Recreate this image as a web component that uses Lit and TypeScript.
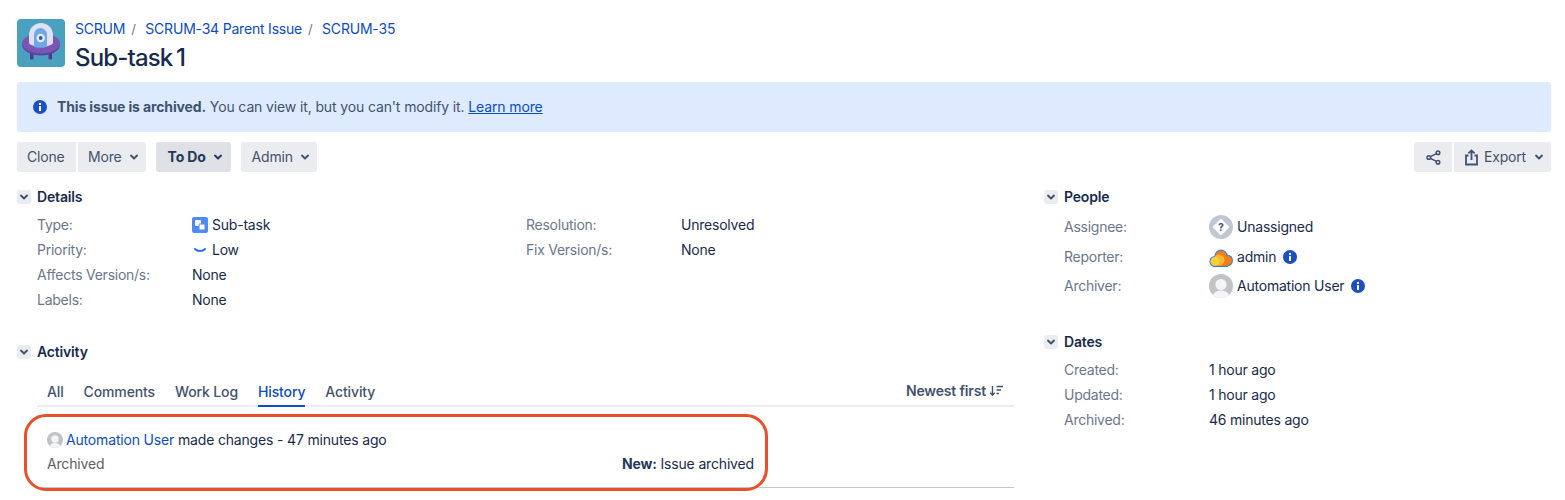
import { LitElement, html, css } from "lit";
import { customElement } from "lit/decorators.js";

const chev = () => html`<svg width="10" height="10" viewBox="0 0 10 10" fill="none"><path d="M2 3.6 5 6.4 8 3.6" stroke="currentColor" stroke-width="2" stroke-linecap="round" stroke-linejoin="round"/></svg>`;
const info = html`<svg width="14" height="14" viewBox="0 0 14 14"><circle cx="7" cy="7" r="7" fill="#1d4fc4"/><rect x="6" y="6" width="2" height="5" rx=".6" fill="#fff"/><circle cx="7" cy="4" r="1.15" fill="#fff"/></svg>`;
const userAvatar = (s: number) => html`<svg width="${s}" height="${s}" viewBox="0 0 24 24"><defs><clipPath id="uc"><circle cx="12" cy="12" r="12"/></clipPath></defs><g clip-path="url(#uc)"><rect width="24" height="24" fill="#c1c3c6"/><circle cx="12" cy="10.5" r="5.6" fill="#f4f5f7"/><path d="M2.5 26c.5-6.5 4.5-9.5 9.5-9.5s9 3 9.5 9.5z" fill="#f4f5f7"/></g></svg>`;

@customElement("app-root")
export class AppRoot extends LitElement {
  static styles = css`
    :host { display: block; width: 1565px; height: 500px; overflow: hidden; background: #fff; position: relative; box-sizing: border-box; padding: 19px 14px 0 17px; font: 14px/20px Inter, "Liberation Sans", sans-serif; letter-spacing: -0.17px; color: #172b4d; }
    a { color: #0c4cc4; text-decoration: none; }
    .head { display: flex; gap: 10px; height: 48px; }
    .crumbs { display: flex; height: 20px; align-items: center; letter-spacing: -0.2px; }
    .crumbs i { font-style: normal; color: #6b778c; margin: 0 9.5px 0 6px; font-size: 13px; }
    h1 { margin: 5px 0 0; font-size: 24px; line-height: 28px; font-weight: 500; letter-spacing: -0.85px; word-spacing: -2px; color: #172b4d; }
    .banner { margin-top: 15px; height: 50px; background: #deebff; border-radius: 3px; display: flex; align-items: center; padding-left: 16px; gap: 10px; color: #42526e; letter-spacing: -0.13px; }
    .banner b { font-weight: 700; }
    .banner a { text-decoration: underline; }
    .tools { margin-top: 10px; display: flex; height: 30px; }
    .btn { height: 30px; box-sizing: border-box; display: flex; align-items: center; gap: 7px; background: #ebecf0; color: #42526e; border-radius: 3px; padding: 0 7px 0 10px; }
    .btn.l { border-radius: 3px 0 0 3px; margin-right: 2px; }
    .btn.r { border-radius: 0 3px 3px 0; }
    .btn.todo { background: #dfe1e6; color: #253858; font-weight: 700; margin: 0 10px; padding: 0 8px 0 12px; }
    .btn.admin { padding-left: 11px; }
    .btn.clone { width: 59px; }
    .btn.share { width: 38px; padding-left: 12px; }
    .btn.export { gap: 5px; padding-right: 7px; }
    .export-label { margin-right: 3px; }
    .spacer { flex: 1; }
    .cols { display: grid; grid-template-columns: 997px 507px; gap: 30px; margin-top: 15px; }
    .sec-h { display: flex; align-items: center; height: 20px; gap: 6px; font-weight: 600; color: #172b4d; }
    .tog { width: 14px; height: 14px; background: #ebecf0; border-radius: 3px; display: flex; align-items: center; justify-content: center; color: #42526e; }
    .details { display: grid; grid-template-columns: 489px 1fr; margin: 5px 0 0 20px; }
    .row { display: grid; height: 25px; align-items: center; grid-template-columns: 155px 1fr; }
    .lbl { color: #6b778c; letter-spacing: -0.25px; }
    .val { display: flex; align-items: center; gap: 4px; color: #172b4d; letter-spacing: -0.22px; }
    .info-wrap { margin-left: 3px; display: flex; }
    .activity { margin-top: 30px; }
    .tabs { display: flex; margin: 15px 0 0 20px; padding-left: 10px; height: 28px; border-bottom: 2px solid #ebecf0; gap: 20px; color: #42526e; font-weight: 500; letter-spacing: -0.13px; }
    .tab { height: 30px; box-sizing: border-box; padding-top: 5px; }
    .tab.on { color: #0c4cc4; border-bottom: 2px solid #0c4cc4; }
    .sort { margin-left: auto; padding: 4px 10px 0 0; display: flex; gap: 3px; height: 20px; font-weight: 600; letter-spacing: -0.17px; }
    .sort svg { margin-top: 4px; }
    .entry { margin-left: 20px; height: 81px; box-sizing: border-box; border-bottom: 1px solid #c1c7d0; padding: 23px 0 0 10px; }
    .who { display: flex; align-items: center; gap: 3px; height: 20px; }
    .ch { display: flex; margin-top: 4px; height: 20px; }
    .ch .o { width: 575px; color: #5e5e5e; }
    .ch b { font-weight: 700; color: #253858; }
    .mark { position: absolute; left: 24px; top: 414px; width: 744px; height: 77px; box-sizing: border-box; border: 3px solid #e8502a; border-radius: 22px; pointer-events: none; }
    .side { margin: 6px 0 0 20px; }
    .people .side { margin-top: 5.5px; }
    .side .row { grid-template-columns: 145px 1fr; }
    .people .row { height: 29.5px; }
    .dates { margin-top: 30.5px; }
  `;

  row(l: string, v: unknown) {
    return html`<div class="row"><span class="lbl">${l}</span><span class="val">${v}</span></div>`;
  }

  render() {
    return html`
      <div class="head">
        <svg width="48" height="48" viewBox="0 0 48 48">
          <rect width="48" height="48" rx="4" fill="#4aa1bf"/>
          <rect x="13" y="32" width="3.500" height="8.500" rx="1" fill="#4f3a8f"/><rect x="31.500" y="32" width="3.500" height="8.500" rx="1" fill="#4f3a8f"/>
          <ellipse cx="24" cy="25.500" rx="19" ry="11" fill="#5d429f"/>
          <ellipse cx="24" cy="24.500" rx="19" ry="10" fill="#7a55b6"/>
          <path d="M12 24V16a12 12 0 0 1 24 0v8c-3 5-21 5-24 0z" fill="#dfe0f4"/>
          <path d="M17 28V15.500a6.500 6.500 0 0 1 13 0V28c-3 1-10 1-13 0z" fill="#6fa8e4"/>
          <circle cx="23.700" cy="19" r="4.200" fill="#e3ecf7"/><circle cx="23.700" cy="19" r="1.900" fill="#3c5a8c"/>
        </svg>
        <div>
          <div class="crumbs"><a>SCRUM</a><i>/</i><a>SCRUM-34 Parent Issue</a><i>/</i><a>SCRUM-35</a></div>
          <h1>Sub-task 1</h1>
        </div>
      </div>
      <div class="banner">${info}<span><b>This issue is archived.</b> You can view it, but you can't modify it. <a>Learn more</a></span></div>
      <div class="tools">
        <div class="btn l clone">Clone</div>
        <div class="btn r">More ${chev()}</div>
        <div class="btn todo">To Do ${chev()}</div>
        <div class="btn admin">Admin ${chev()}</div>
        <div class="spacer"></div>
        <div class="btn l share">
          <svg width="15" height="15" viewBox="0 0 15 15" fill="none" stroke="#42526e" stroke-width="1.5"><circle cx="2.800" cy="7.500" r="1.800"/><circle cx="12" cy="2.800" r="1.800"/><circle cx="12" cy="12.200" r="1.800"/><path d="M4.400 6.700 10.400 3.600M4.400 8.300l6 3.100"/></svg>
        </div>
        <div class="btn r export">
          <svg width="15" height="17" viewBox="0 0 15 17" fill="none" stroke="#42526e" stroke-width="1.800"><path d="M4.500 6.500H2v9h11v-9h-2.500"/><path d="M7.500 11V1.500M4.400 4.400l3.100-3 3.100 3"/></svg>
          <span class="export-label">Export</span> ${chev()}
        </div>
      </div>
      <div class="cols">
        <div>
          <div class="sec-h"><span class="tog">${chev()}</span>Details</div>
          <div class="details">
            <div>
              ${this.row("Type:", html`<svg width="16" height="16" viewBox="0 0 16 16"><rect width="16" height="16" rx="2" fill="#4c8bf5"/><rect x="3" y="3" width="6" height="6" rx="1" fill="#fff"/><rect x="7" y="7" width="6" height="6" rx="1" fill="#fff" stroke="#4c8bf5"/></svg> Sub-task`)}
              ${this.row("Priority:", html`<svg width="16" height="16" viewBox="0 0 16 16" fill="none"><path d="M3 7c2.500 2.600 7.500 2.600 10 0" stroke="#2a6ff0" stroke-width="2" stroke-linecap="round"/></svg> Low`)}
              ${this.row("Affects Version/s:", "None")}
              ${this.row("Labels:", "None")}
            </div>
            <div>
              ${this.row("Resolution:", "Unresolved")}
              ${this.row("Fix Version/s:", "None")}
            </div>
          </div>
          <div class="activity">
            <div class="sec-h"><span class="tog">${chev()}</span>Activity</div>
            <div class="tabs">
              <div class="tab">All</div><div class="tab">Comments</div><div class="tab">Work Log</div><div class="tab on">History</div><div class="tab">Activity</div>
              <div class="sort">Newest first
                <svg width="15" height="12" viewBox="0 0 15 12" fill="none" stroke="#42526e" stroke-width="1.400"><path d="M3.500 1v9M1.300 7.800l2.200 2.400 2.200-2.400M7.500 1.500H14M7.500 5h4.500M7.500 8.500h2.500"/></svg>
              </div>
            </div>
            <div class="entry">
              <div class="who">${userAvatar(16)}<span><a>Automation User</a> made changes - 47 minutes ago</span></div>
              <div class="ch"><span class="o">Archived</span><span><b>New:</b> Issue archived</span></div>
            </div>
          </div>
        </div>
        <div>
          <div class="people">
            <div class="sec-h"><span class="tog">${chev()}</span>People</div>
            <div class="side">
              ${this.row("Assignee:", html`<svg width="24" height="24" viewBox="0 0 24 24"><circle cx="12" cy="12" r="12" fill="#c1c7d0"/><path d="M12 5.500 18.500 12 12 18.500 5.500 12z" fill="#fff" stroke="#fff" stroke-width="3" stroke-linejoin="round"/><text x="12" y="15.500" font-size="10" font-weight="700" text-anchor="middle" fill="#42526e">?</text></svg> Unassigned`)}
              ${this.row("Reporter:", html`<svg width="24" height="24" viewBox="0 0 24 24"><g fill="#2f7fd8"><circle cx="6" cy="16.500" r="5.500"/><circle cx="12" cy="11" r="6.500"/><circle cx="18" cy="15.500" r="6"/><rect x="5" y="14" width="14" height="8"/></g><g fill="#ec7e1f"><circle cx="12" cy="11" r="5.500"/><circle cx="18" cy="15.500" r="5"/><rect x="8" y="14" width="11" height="7"/></g><circle cx="10" cy="15" r="5.500" fill="#f8b82e"/><circle cx="6" cy="16.500" r="4.500" fill="#f9cf3d"/></svg> admin <span class="info-wrap">${info}</span>`)}
              ${this.row("Archiver:", html`${userAvatar(24)} Automation User <span class="info-wrap">${info}</span>`)}
            </div>
          </div>
          <div class="dates">
            <div class="sec-h"><span class="tog">${chev()}</span>Dates</div>
            <div class="side">
              ${this.row("Created:", "1 hour ago")}
              ${this.row("Updated:", "1 hour ago")}
              ${this.row("Archived:", "46 minutes ago")}
            </div>
          </div>
        </div>
      </div>
      <div class="mark"></div>
    `;
  }
}
